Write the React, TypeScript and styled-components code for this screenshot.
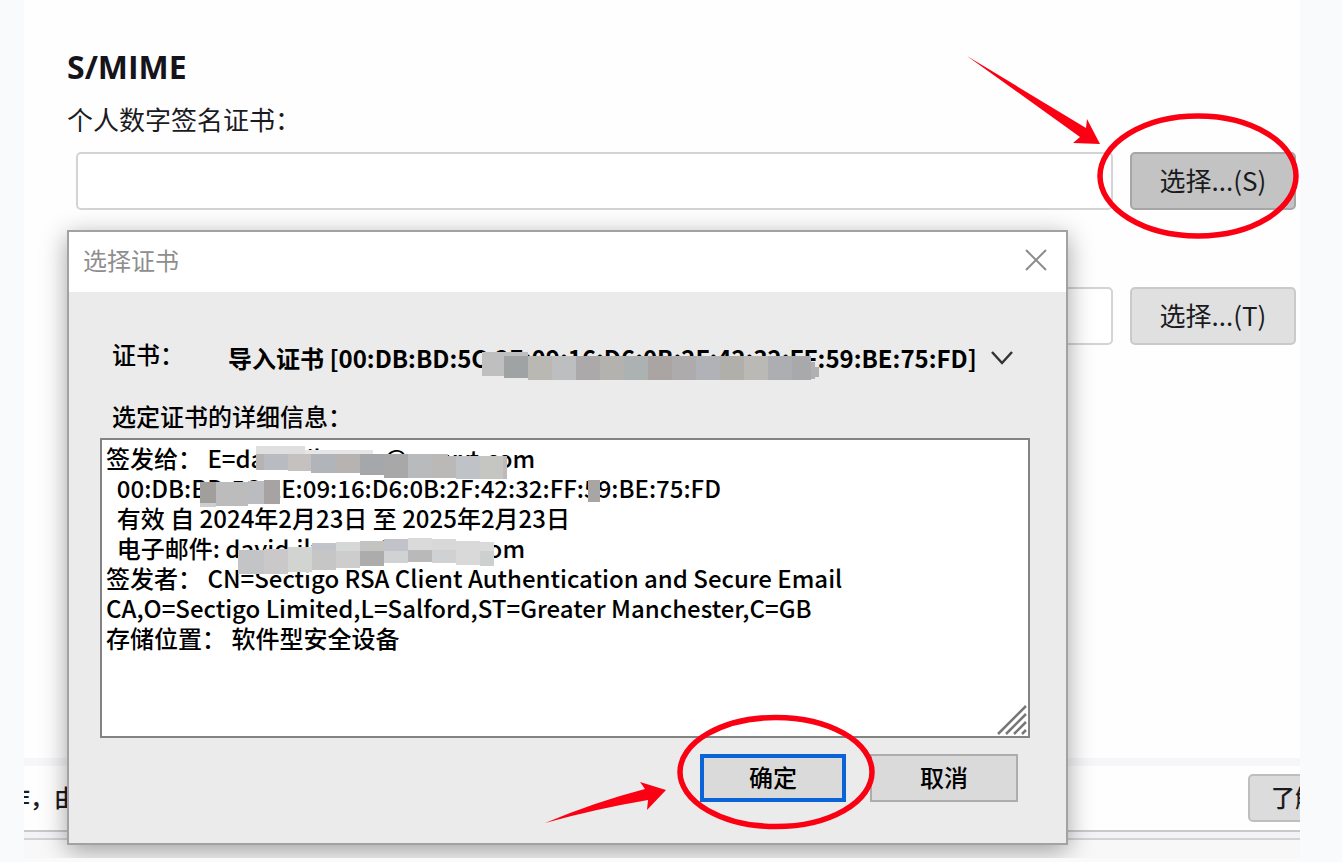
import React from "react";
import styled, { createGlobalStyle } from "styled-components";

const GlobalStyle = createGlobalStyle`
  *, *::before, *::after { box-sizing: border-box; }
  body {
    margin: 0;
    background: #f9fafc;
    font-family: "Noto Sans CJK SC", "Noto Sans", sans-serif;
    color: #1b1b1f;
  }
  button, input, select, textarea { font: inherit; color: inherit; margin: 0; }
`;

const Panel = styled.main`
  position: relative;
  display: flex;
  flex-direction: column;
  min-height: calc(100vh - 4px);
  margin: 0 42px 4px 24px;
  background: #fefefe;
  overflow: hidden;
`;

const Section = styled.section`
  padding: 47px 4px 0 43px;
`;

const Heading = styled.h2`
  margin: 0 0 15px;
  font-family: "Open Sans", "Noto Sans", sans-serif;
  font-size: 32px;
  line-height: 40px;
  font-weight: 700;
  color: #15141a;
`;

const FieldLabel = styled.label`
  display: block;
  margin-bottom: 16px;
  font-size: 26px;
  line-height: 34px;
`;

const FieldRow = styled.div`
  display: flex;
  gap: 17px;
  margin: 0 0 77px 9px;
`;

const CertInput = styled.input`
  flex: 1;
  min-width: 0;
  height: 58px;
  padding: 0 12px;
  border: 2px solid #d4d4d6;
  border-radius: 5px;
  background: #fff;
`;

const ButtonAnchor = styled.div`
  position: relative;
  flex: none;
`;

const PickButton = styled.button<{ $active?: boolean }>`
  width: 166px;
  height: 58px;
  padding: 0 0 2px;
  border: 2px solid ${(p) => (p.$active ? "#a6a6a6" : "#cacaca")};
  border-radius: 5px;
  background: ${(p) => (p.$active ? "#c3c3c3" : "#e0e0e0")};
  font-size: 26px;
  line-height: 34px;
`;

const Overlay = styled.svg<{ $left: number; $top: number }>`
  position: absolute;
  left: ${(p) => p.$left}px;
  top: ${(p) => p.$top}px;
  overflow: visible;
  pointer-events: none;
`;

const Footer = styled.footer`
  margin-top: auto;
  border-top: 8px solid #f6f6f8;
  background: #f8f8f8;
`;

const Notice = styled.div`
  display: flex;
  align-items: center;
  justify-content: space-between;
  height: 66px;
  border-bottom: 2px solid #c9c9cb;
  background: #fefefe;
  font-size: 24px;
  line-height: 32px;
  font-weight: 500;
`;

const NoticeText = styled.span`
  margin-left: -18px;
  padding-bottom: 2px;
  white-space: nowrap;
`;

const NoticeButton = styled.button`
  flex: none;
  width: 144px;
  height: 48px;
  margin-right: -92px;
  padding: 0 2px 2px 0;
  border: 2px solid #bebebe;
  border-radius: 5px;
  background: #dcdcdc;
`;

const FooterEdge = styled.div`
  height: 26px;
  border-top: 6px solid #f3f3f6;
  &::before {
    content: "";
    display: block;
    height: 2px;
    background: #d2d2d9;
  }
`;

const Dialog = styled.div`
  position: absolute;
  top: 230px;
  left: 43px;
  right: 232px;
  border: 2px solid #a2a2a2;
  background: #ebebeb;
  color: #000;
  font-size: 24px;
  font-weight: 500;
  box-shadow: 0 6px 24px rgba(0, 0, 0, 0.36);
`;

const TitleBar = styled.header`
  display: flex;
  align-items: center;
  justify-content: space-between;
  height: 60px;
  padding: 0 0 4px 14px;
  background: #fff;
`;

const Title = styled.h3`
  margin: 0;
  font-size: 24px;
  line-height: 32px;
  font-weight: 400;
  color: #8e8e8e;
`;

const CloseButton = styled.button`
  display: flex;
  align-items: center;
  justify-content: center;
  width: 60px;
  height: 56px;
  padding: 0;
  border: 0;
  background: none;
`;

const DialogBody = styled.div`
  padding: 40px 36px 41px 31px;
`;

const CertRow = styled.div`
  display: flex;
  align-items: flex-start;
  margin: 0 16px 16px 12px;
`;

const CertLabel = styled.label`
  width: 116px;
  line-height: 44px;
`;

const SelectWrap = styled.div`
  position: relative;
  flex: 1;
  min-width: 0;
`;

const CertSelect = styled.select`
  display: block;
  width: 100%;
  height: 50px;
  padding: 0;
  border: 0;
  appearance: none;
  background: transparent;
  font-weight: 700;
`;

const Chevron = styled.svg`
  position: absolute;
  right: 0;
  top: 18px;
  pointer-events: none;
`;

const DetailsLabel = styled.label`
  display: block;
  margin: 0 0 4px 12px;
  line-height: 36px;
`;

const DetailsWrap = styled.div`
  position: relative;
`;

const Details = styled.textarea`
  display: block;
  width: 100%;
  height: 300px;
  padding: 3px 4px;
  border: 2px solid #838383;
  border-radius: 0;
  background: #fff;
  line-height: 30px;
  white-space: pre;
  overflow: hidden;
  resize: none;
  outline: none;
`;

const Grip = styled.svg`
  position: absolute;
  right: 3px;
  bottom: 3px;
`;

const Actions = styled.div`
  display: flex;
  justify-content: flex-end;
  gap: 24px;
  margin: 16px 12px 0 0;
`;

const ActionButton = styled.button<{ $primary?: boolean }>`
  display: block;
  width: ${(p) => (p.$primary ? 146 : 148)}px;
  height: 48px;
  padding: 0 0 3px;
  border: ${(p) => (p.$primary ? "4px solid #0a64d8" : "2px solid #adadad")};
  background: #dadada;
  line-height: 32px;
`;

type Block = [x: number, y: number, right: number, bottom: number, fill: string];

/* Mosaic blocks over the selected certificate's serial number. */
const selectBlocks: Block[] = [
  [254, 20, 276, 44, "#bfbfbf"],
  [276, 20, 300, 24, "#bfbfbf"],
  [276, 24, 300, 46, "#9fa3a3"],
  [300, 24, 324, 48, "#bab8b2"],
  [324, 24, 348, 48, "#bcbebf"],
  [348, 24, 372, 48, "#aba9aa"],
  [372, 24, 396, 48, "#b3b2af"],
  [396, 24, 420, 48, "#acb1b1"],
  [420, 24, 444, 48, "#aaa5a2"],
  [444, 24, 468, 48, "#aeabad"],
  [468, 24, 492, 48, "#b1b2b7"],
  [492, 24, 516, 48, "#b1afaa"],
  [516, 24, 540, 48, "#bab9b5"],
  [540, 24, 564, 48, "#adaeb2"],
  [564, 24, 583, 48, "#a9a9ac"],
  [583, 30, 587, 47, "#b0b0b2"],
  [587, 35, 591, 45, "#b0b0b2"],
];

/* Mosaic blocks over the subject, serial number and e-mail lines. */
const detailBlocks: Block[] = [
  [156, 8, 205, 16, "#dfdfdf"],
  [205, 12, 273, 16, "#e6e6e6"],
  [156, 16, 164, 32, "#b6b3b2"],
  [164, 16, 188, 32, "#babbc0"],
  [188, 16, 211, 33, "#c5c1c1"],
  [211, 16, 236, 35, "#b1b4b9"],
  [236, 16, 260, 35, "#b8b3b3"],
  [260, 16, 284, 37, "#a6a7ab"],
  [284, 16, 308, 40, "#a9a8a9"],
  [308, 16, 332, 40, "#b8babb"],
  [332, 16, 348, 40, "#bbb9b7"],
  [348, 18, 356, 40, "#bbb9b7"],
  [356, 18, 380, 41, "#bfc2c6"],
  [380, 18, 403, 41, "#c5c5c1"],
  [403, 18, 407, 41, "#bfb9ba"],
  [100, 44, 116, 65, "#a09f9b"],
  [100, 65, 116, 69, "#cccdcc"],
  [116, 44, 148, 68, "#bcbcbc"],
  [148, 43, 164, 66, "#bbbcbf"],
  [164, 42, 180, 66, "#a7a3a2"],
  [488, 42, 500, 64, "#a8a5a5"],
  [138, 112, 164, 136, "#c3c4c6"],
  [164, 111, 188, 136, "#cbc8c9"],
  [188, 109, 212, 134, "#d2d4d2"],
  [212, 105, 236, 113, "#c3c4cb"],
  [212, 113, 236, 132, "#c6c6c6"],
  [236, 104, 260, 113, "#d6d7d7"],
  [236, 113, 260, 130, "#cdcdce"],
  [260, 103, 284, 113, "#c3c4c2"],
  [260, 113, 284, 128, "#acacac"],
  [284, 101, 308, 113, "#c2c3ca"],
  [284, 113, 308, 125, "#d0d2d4"],
  [308, 100, 332, 112, "#dadada"],
  [308, 112, 332, 124, "#b9b9ba"],
  [332, 101, 356, 112, "#d8d8d8"],
  [332, 112, 356, 125, "#d0d1d3"],
  [356, 103, 380, 127, "#d9d9d9"],
  [380, 104, 394, 113, "#dadada"],
  [380, 113, 394, 128, "#ccd0cf"],
];

function Mosaic({ blocks }: { blocks: Block[] }) {
  return (
    <Overlay $left={0} $top={0} width="1" height="1" shapeRendering="crispEdges" aria-hidden="true">
      {blocks.map(([x, y, right, bottom, fill]) => (
        <rect key={`${x}-${y}`} x={x} y={y} width={right - x} height={bottom - y} fill={fill} />
      ))}
    </Overlay>
  );
}

const serial = "00:DB:BD:5C:2E:09:16:D6:0B:2F:42:32:FF:59:BE:75:FD";
const email = "david.ilxxxxx@xxxxxt.com";

const details = [
  `签发给： E=${email}`,
  `  ${serial}`,
  "  有效 自 2024年2月23日 至 2025年2月23日",
  `  电子邮件: ${email}`,
  "签发者： CN=Sectigo RSA Client Authentication and Secure Email",
  "CA,O=Sectigo Limited,L=Salford,ST=Greater Manchester,C=GB",
  "存储位置： 软件型安全设备",
].join("\n");

export default function App() {
  return (
    <>
      <GlobalStyle />
      <Panel>
        <Section>
          <Heading>S/MIME</Heading>
          <FieldLabel htmlFor="sign-cert">个人数字签名证书：</FieldLabel>
          <FieldRow>
            <CertInput id="sign-cert" type="text" />
            <ButtonAnchor>
              <PickButton type="button" $active>选择...(S)</PickButton>
              <Overlay $left={-163} $top={-96} width="333" height="184" aria-hidden="true">
                <ellipse cx="231" cy="120" rx="98" ry="60" fill="none" stroke="#fb0012" strokeWidth="5.5" />
                <path d="M0 0 L119 72 L120 63 L133 88 L106 87 L113 81 Z" fill="#fb0012" />
              </Overlay>
            </ButtonAnchor>
          </FieldRow>
          <FieldRow>
            <CertInput type="text" aria-label="个人加密证书" />
            <PickButton type="button">选择...(T)</PickButton>
          </FieldRow>
        </Section>

        <Footer>
          <Notice>
            <NoticeText>作，由</NoticeText>
            <NoticeButton type="button">了解更多</NoticeButton>
          </Notice>
          <FooterEdge />
        </Footer>

        <Dialog role="dialog" aria-labelledby="dialog-title">
          <TitleBar>
            <Title id="dialog-title">选择证书</Title>
            <CloseButton type="button" aria-label="关闭">
              <svg width="22" height="22" viewBox="0 0 22 22" fill="none" stroke="#8c8c8c" strokeWidth="2">
                <path d="M1 1 L21 21 M21 1 L1 21" />
              </svg>
            </CloseButton>
          </TitleBar>
          <DialogBody>
            <CertRow>
              <CertLabel htmlFor="cert">证书：</CertLabel>
              <SelectWrap>
                <CertSelect id="cert">
                  <option>{`导入证书 [${serial}]`}</option>
                </CertSelect>
                <Mosaic blocks={selectBlocks} />
                <Chevron width="24" height="16" viewBox="0 0 24 16" fill="none" stroke="#333" strokeWidth="2.5">
                  <path d="M2 2 L12 13 L22 2" />
                </Chevron>
              </SelectWrap>
            </CertRow>
            <DetailsLabel htmlFor="details">选定证书的详细信息：</DetailsLabel>
            <DetailsWrap>
              <Details id="details" readOnly value={details} />
              <Mosaic blocks={detailBlocks} />
              <Grip width="30" height="30" viewBox="0 0 30 30" fill="none" stroke="#777" strokeWidth="2.5" aria-hidden="true">
                <path d="M1 29 L29 1 M9 29 L29 9 M17 29 L29 17 M25 29 L29 25" />
              </Grip>
            </DetailsWrap>
            <Actions>
              <ButtonAnchor>
                <ActionButton type="button" $primary>确定</ActionButton>
                <Overlay $left={-155} $top={-40} width="331" height="116" aria-hidden="true">
                  <ellipse cx="231" cy="58" rx="96" ry="54.5" fill="none" stroke="#fb0012" strokeWidth="5.5" />
                  <path d="M0 109 Q50 88 100 75 L95 68 L121 76 L102 96 L103 86 Q50 95 0 109 Z" fill="#fb0012" />
                </Overlay>
              </ButtonAnchor>
              <ActionButton type="button">取消</ActionButton>
            </Actions>
          </DialogBody>
        </Dialog>
      </Panel>
    </>
  );
}
